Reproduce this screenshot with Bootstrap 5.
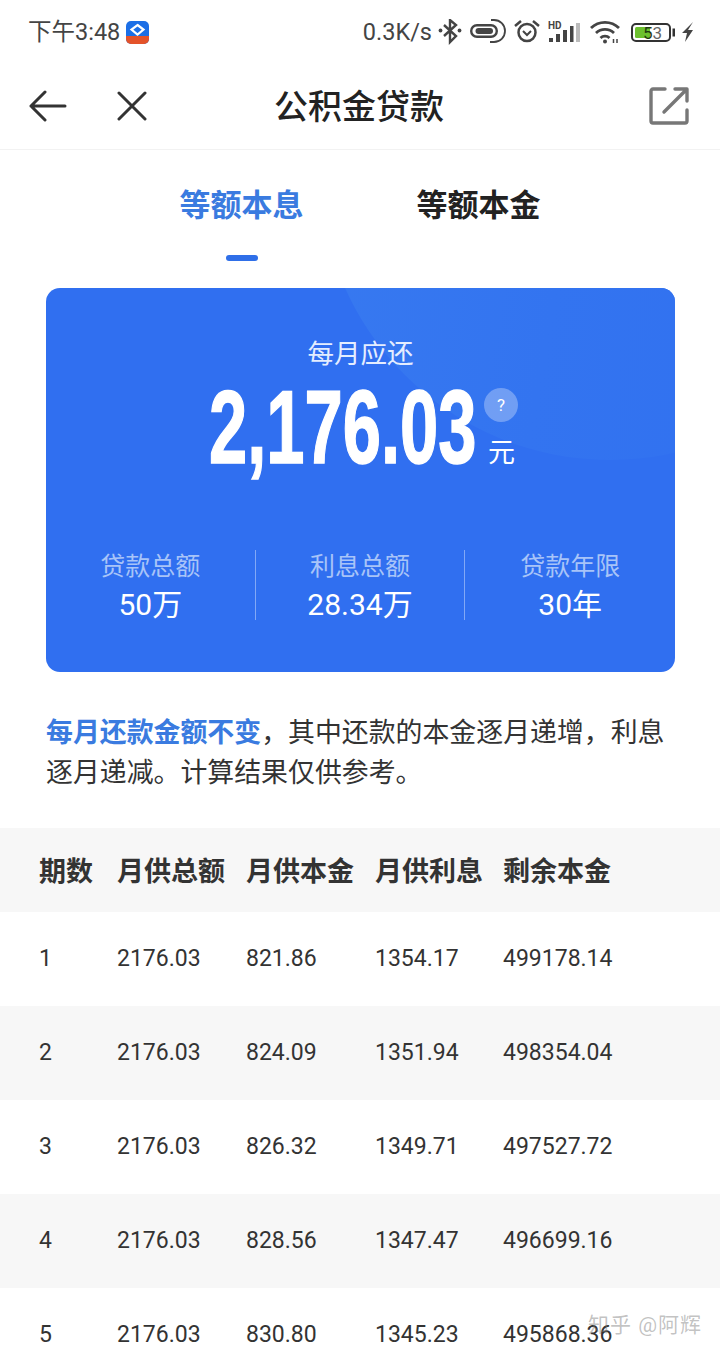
<!DOCTYPE html>
<html lang="zh-CN">

<head>
    <meta charset="UTF-8">
    <meta name="viewport" content="width=device-width, initial-scale=1.0">
    <title>公积金贷款</title>
    <link href="https://cdn.jsdelivr.net/npm/bootstrap@5.3.0/dist/css/bootstrap.min.css" rel="stylesheet">
    <style>
        html, body {
            height: 1355px;
            overflow: hidden;
        }

        body {
            font-family: Roboto, "Noto Sans CJK SC", sans-serif;
            color: #333;
            background: #fff;
        }

        .status-bar {
            height: 66px;
            padding: 0 27px 0 28px;
            color: #444;
            font-size: 23.5px;
        }

        .status-icons svg {
            display: block;
            margin-bottom: 2px;
        }

        .app-logo { margin-left: 6px; margin-bottom: 1px; }
        .speed { margin-right: 6px; }
        .ic-gap-8 { margin-left: 8px; }
        .ic-gap-10 { margin-left: 10px; }
        .ic-gap-11 { margin-left: 11px; }
        .ic-gap-6 { margin-left: 6px; }

        .title-bar {
            height: 84px;
            padding: 0 31px 3px 29px;
            border-bottom: 1px solid #f2f2f2;
        }

        .title-side {
            flex: 1 1 0;
        }

        .close-ic {
            margin-left: 50px;
        }

        .page-title {
            margin-top: 3px;
            font-size: 34px;
            font-weight: 500;
            color: #222;
        }

        .tab-row {
            height: 138px;
            padding-top: 34px;
            gap: 113px;
            font-size: 31px;
            font-weight: 700;
            line-height: 44px;
            color: #222;
        }

        .tab-on {
            position: relative;
            color: #3a7be0;
        }

        .tab-on::after {
            content: "";
            position: absolute;
            left: 50%;
            top: 71px;
            width: 32px;
            height: 6px;
            margin-left: -16px;
            border-radius: 3px;
            background: #2f6fe8;
        }

        .loan-card {
            position: relative;
            overflow: hidden;
            height: 384px;
            margin: 0 45px 0 46px;
            border-radius: 14px;
            background: #306ff0;
            color: #fff;
        }

        .loan-glow {
            position: absolute;
            left: 274px;
            top: -408px;
            width: 580px;
            height: 580px;
            border-radius: 50%;
            background: linear-gradient(100deg, #387af0 0%, #3374f0 45%, #306ff0 100%);
        }

        .card-inner {
            position: relative;
        }

        .pay-label {
            padding-top: 48px;
            font-size: 26.5px;
            line-height: 36px;
            color: #e4edff;
        }

        .pay-line {
            height: 90px;
            margin-top: 11px;
            padding-left: 163px;
        }

        .pay-num {
            width: 267px;
            font-family: "Liberation Sans", sans-serif;
            font-size: 103px;
            font-weight: 700;
            line-height: 90px;
            white-space: nowrap;
            transform: scaleX(.667);
            transform-origin: left center;
            -webkit-text-stroke: 1.5px #fff;
        }

        .pay-side {
            width: 40px;
            height: 90px;
            margin-left: 8px;
        }

        .pay-help {
            width: 34px;
            height: 34px;
            margin-top: 5px;
            border-radius: 50%;
            background: rgba(255, 255, 255, .3);
            font-size: 17px;
            line-height: 34px;
            text-align: center;
        }

        .pay-unit {
            margin-top: 13px;
            margin-left: 4px;
            font-size: 27px;
            line-height: 36px;
        }

        .stat-row {
            margin-top: 77px;
        }

        .stat-cell {
            width: 210px;
            height: 70px;
            text-align: center;
        }

        .stat-cell:not(:last-child) {
            border-right: 1px solid rgba(255, 255, 255, .4);
        }

        .stat-label {
            font-size: 25px;
            line-height: 34px;
            color: #a8c4f8;
        }

        .stat-value {
            margin-top: 2px;
            font-size: 30px;
            line-height: 38px;
        }

        .note {
            margin: 41px 40px 0 46px;
            font-size: 26.9px;
            line-height: 40px;
            color: #333;
        }

        .note b {
            color: #3a7be0;
            font-weight: 700;
        }

        .plan-table {
            width: 100%;
            margin-top: 35px;
            table-layout: fixed;
            color: #333;
        }

        .plan-table th,
        .plan-table td {
            padding: 0;
        }

        .plan-table th {
            height: 84px;
            padding-top: 5px;
            background: #f7f7f7;
            font-size: 27px;
            font-weight: 700;
        }

        .plan-table td {
            height: 94px;
            font-size: 23px;
        }

        .plan-table tr:nth-child(even) td {
            background: #f7f7f7;
        }

        .plan-table .col-a { width: 117px; padding-left: 39px; }
        .plan-table .col-b { width: 129px; }
        .plan-table .col-c { width: 129px; }
        .plan-table .col-d { width: 128px; }

        .watermark {
            position: absolute;
            right: 18px;
            top: 1312px;
            font-size: 21px;
            line-height: 26px;
            color: rgba(120, 120, 120, .45);
            letter-spacing: 1px;
        }
    </style>
</head>

<body>
    <!-- status bar -->
    <div class="status-bar d-flex align-items-center justify-content-between">
        <div class="d-flex align-items-center">
            <span>下午3:48</span>
            <svg class="app-logo" width="23" height="23" viewBox="0 0 23 23">
                <rect width="23" height="23" rx="5" fill="#1c6fe6" />
                <path d="M0 15h23v3a5 5 0 0 1-5 5H5a5 5 0 0 1-5-5z" fill="#e4532a" />
                <path d="M11.500 4l6 4.500-6 5-6-5z" fill="none" stroke="#fff" stroke-width="2.200" />
            </svg>
        </div>
        <div class="status-icons d-flex align-items-center">
            <span class="speed">0.3K/s</span>
            <svg width="24" height="26" viewBox="0 0 24 26" fill="none" stroke="#444" stroke-width="2.400">
                <path d="M6 6l12 11-6 6V1l6 5L6 17" />
                <circle cx="2.500" cy="11.500" r="1.900" fill="#444" stroke="none" />
                <circle cx="21.500" cy="11.500" r="1.900" fill="#444" stroke="none" />
            </svg>
            <svg class="ic-gap-8" width="36" height="26" viewBox="0 0 36 26" fill="none" stroke="#444">
                <rect x="1.200" y="6.200" width="25.600" height="11.600" rx="5.800" stroke-width="2.400" />
                <rect x="5.500" y="9" width="17.500" height="6" rx="3" fill="#444" stroke="none" />
                <path d="M21 1h3a11 11 0 0 1 0 22h-4" stroke-width="1.800" />
            </svg>
            <svg class="ic-gap-8" width="26" height="26" viewBox="0 0 26 26" fill="none" stroke="#444">
                <circle cx="13" cy="13.500" r="8.500" stroke-width="2.500" />
                <path d="M9 12l4 4 4-4" stroke-width="2" />
                <path d="M1 7l6-5M25 7l-6-5" stroke-width="2.500" />
            </svg>
            <svg class="ic-gap-8" width="32" height="26" viewBox="0 0 32 26">
                <text x="0" y="10" font-size="10" font-weight="700" fill="#444" font-family="Roboto">HD</text>
                <rect x="1" y="19" width="4" height="4" fill="#444" />
                <rect x="8" y="15" width="4" height="8" fill="#444" />
                <rect x="15" y="11" width="4" height="12" fill="#444" />
                <rect x="22" y="7" width="3.500" height="16" fill="#444" />
                <rect x="28" y="4" width="4" height="19" fill="#bbb" />
            </svg>
            <svg class="ic-gap-10" width="30" height="26" viewBox="0 0 30 26" fill="none" stroke="#444" stroke-width="2.800">
                <path d="M1 9a20 20 0 0 1 28 0" />
                <path d="M6 14a13 13 0 0 1 18 0" />
                <path d="M10.500 19a6.500 6.500 0 0 1 9 0" />
                <circle cx="15" cy="22.500" r="2" fill="#444" stroke="none" />
                <path d="M23.500 24v-4M27 24v-4" stroke-width="1.500" />
            </svg>
            <svg class="ic-gap-11" width="44" height="26" viewBox="0 0 44 26">
                <rect x="1" y="5" width="38" height="17" rx="4" fill="#fff" stroke="#333" stroke-width="2" />
                <rect x="4" y="8" width="15" height="11" rx="1.500" fill="#6cc02e" />
                <rect x="41.500" y="9.500" width="2.500" height="8" fill="#333" />
                <text x="12" y="19.500" font-size="17" fill="#1d3a10" font-family="Roboto">5</text>
                <text x="21.500" y="19.500" font-size="17" fill="#666" font-family="Roboto">3</text>
            </svg>
            <svg class="ic-gap-6" width="12" height="26" viewBox="0 0 12 26">
                <path d="M12 3L1 14h5l-2 9 8-12H7z" fill="#444" />
            </svg>
        </div>
    </div>

    <!-- title bar -->
    <div class="title-bar d-flex align-items-center">
        <div class="title-side d-flex align-items-center">
            <svg width="38" height="32" viewBox="0 0 38 32" fill="none" stroke="#333" stroke-width="3" stroke-linecap="round" stroke-linejoin="round">
                <path d="M36 16H2M16 2L2 16l14 14" />
            </svg>
            <svg class="close-ic" width="30" height="30" viewBox="0 0 30 30" fill="none" stroke="#333" stroke-width="3" stroke-linecap="round">
                <path d="M2 2l26 26M28 2L2 28" />
            </svg>
        </div>
        <div class="page-title">公积金贷款</div>
        <div class="title-side d-flex justify-content-end">
            <svg width="40" height="38" viewBox="0 0 40 38" fill="none" stroke="#777" stroke-width="3.400" stroke-linecap="round" stroke-linejoin="round">
                <path d="M16 2H4a2 2 0 0 0-2 2v30a2 2 0 0 0 2 2h32a2 2 0 0 0 2-2V23" />
                <path d="M26 2h12v12M37 3L15 25" />
            </svg>
        </div>
    </div>

    <!-- tabs -->
    <div class="tab-row d-flex justify-content-center">
        <div class="tab-on">等额本息</div>
        <div>等额本金</div>
    </div>

    <!-- loan card -->
    <div class="loan-card">
        <div class="loan-glow"></div>
        <div class="card-inner">
            <div class="pay-label text-center">每月应还</div>
            <div class="pay-line d-flex">
                <div class="pay-num">2,176.03</div>
                <div class="pay-side">
                    <div class="pay-help">?</div>
                    <div class="pay-unit">元</div>
                </div>
            </div>
            <div class="stat-row d-flex justify-content-center">
                <div class="stat-cell">
                    <div class="stat-label">贷款总额</div>
                    <div class="stat-value">50万</div>
                </div>
                <div class="stat-cell">
                    <div class="stat-label">利息总额</div>
                    <div class="stat-value">28.34万</div>
                </div>
                <div class="stat-cell">
                    <div class="stat-label">贷款年限</div>
                    <div class="stat-value">30年</div>
                </div>
            </div>
        </div>
    </div>

    <p class="note"><b>每月还款金额不变</b>，其中还款的本金逐月递增，利息逐月递减。计算结果仅供参考。</p>

    <!-- repayment table -->
    <table class="plan-table">
        <thead>
            <tr>
                <th class="col-a">期数</th>
                <th class="col-b">月供总额</th>
                <th class="col-c">月供本金</th>
                <th class="col-d">月供利息</th>
                <th>剩余本金</th>
            </tr>
        </thead>
        <tbody id="plan-rows"></tbody>
    </table>

    <div class="watermark">知乎 @阿辉</div>

    <script src="https://cdn.jsdelivr.net/npm/bootstrap@5.3.0/dist/js/bootstrap.bundle.min.js"></script>
    <script>
        const rows = [
            [1, "2176.03", "821.86", "1354.17", "499178.14"],
            [2, "2176.03", "824.09", "1351.94", "498354.04"],
            [3, "2176.03", "826.32", "1349.71", "497527.72"],
            [4, "2176.03", "828.56", "1347.47", "496699.16"],
            [5, "2176.03", "830.80", "1345.23", "495868.36"]
        ];

        document.getElementById("plan-rows").innerHTML = rows.map((r) => `
            <tr>
                <td class="col-a">${r[0]}</td>
                <td>${r[1]}</td>
                <td>${r[2]}</td>
                <td>${r[3]}</td>
                <td>${r[4]}</td>
            </tr>
        `).join("");
    </script>
</body>

</html>
